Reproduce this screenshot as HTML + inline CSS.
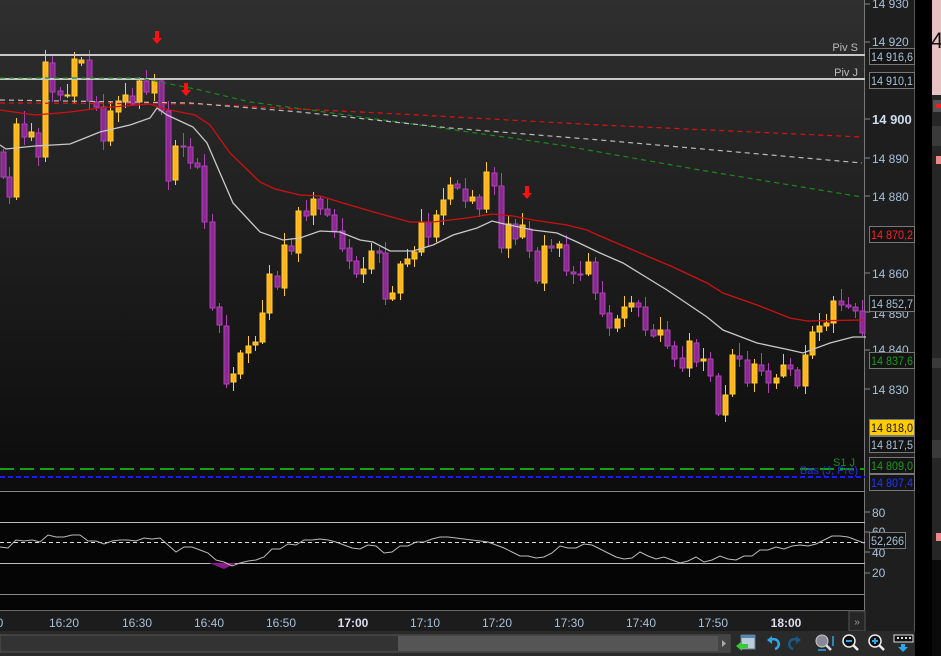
<!DOCTYPE html>
<html><head><meta charset="utf-8"><style>
html,body{margin:0;padding:0;background:#000;width:941px;height:656px;overflow:hidden;font-family:"Liberation Sans",Arial,sans-serif}
svg{position:absolute;left:0;top:0}
</style></head><body>
<svg id="s" width="941" height="656" xmlns="http://www.w3.org/2000/svg" font-family="Liberation Sans, Arial, sans-serif">
<defs>
<linearGradient id="bg" x1="0" y1="0" x2="0" y2="1">
<stop offset="0" stop-color="#2f2f2f"/><stop offset="1" stop-color="#0c0c0c"/></linearGradient>
</defs>
<rect x="0" y="0" width="865" height="491" fill="url(#bg)"/>
<rect x="0" y="491" width="865" height="120" fill="#050505"/>
<rect x="865" y="0" width="50" height="656" fill="#1e1e1e"/>
<line x1="864.5" y1="0" x2="864.5" y2="611" stroke="#777" stroke-width="1"/>
<line x1="914.5" y1="0" x2="914.5" y2="656" stroke="#555"/>
<rect x="915" y="0" width="17" height="656" fill="#000"/>
<rect x="932" y="0" width="9" height="95" fill="#e8c2c2"/>
<rect x="932" y="95" width="9" height="561" fill="#262626"/>
<rect x="933" y="100" width="8" height="12" fill="#555"/><rect x="936" y="104" width="5" height="4" fill="#e22"/>
<rect x="932" y="126" width="9" height="20" fill="#3a3a3a"/>
<rect x="936" y="156" width="5" height="8" fill="#e88"/>
<rect x="932" y="358" width="9" height="10" fill="#3a3a3a"/>
<rect x="932" y="440" width="9" height="18" fill="#3a3a3a"/>
<rect x="936" y="533" width="5" height="8" fill="#e88"/>
<rect x="932" y="560" width="9" height="96" fill="#0b0b0b"/>
<text x="931" y="48" font-size="22" fill="#111">4</text>
<g id="candles"></g>
<line x1="0" y1="55" x2="865" y2="55" stroke="#c8c8c8" stroke-width="2"/>
<line x1="0" y1="79" x2="865" y2="79" stroke="#c8c8c8" stroke-width="2"/>
<text x="858" y="51" font-size="11" fill="#bbb" text-anchor="end">Piv S</text>
<text x="858" y="76" font-size="11" fill="#bbb" text-anchor="end">Piv J</text>
<polyline points="0,78 140,78 200,90 250,102 310,110 420,125 560,145 700,170 862,197" fill="none" stroke="#1a8a1a" stroke-width="1.2" stroke-dasharray="5,4"/>
<polyline points="0,103 200,104 400,114 600,125 862,137" fill="none" stroke="#e01010" stroke-width="1.2" stroke-dasharray="5,4"/>
<polyline points="0,100 190,103 300,112 450,128 600,140 862,163" fill="none" stroke="#bbb" stroke-width="1.2" stroke-dasharray="5,4"/>
<g id="mas"></g>
<g fill="#ff1010">
<path d="M155,31h4v7h3l-5,6l-5,-6h3z"/>
<path d="M184,83h4v7h3l-5,6l-5,-6h3z"/>
<path d="M525,186h4v7h3l-5,6l-5,-6h3z"/>
</g>
<line x1="0" y1="469" x2="865" y2="469" stroke="#14a014" stroke-width="2" stroke-dasharray="14,6"/>
<line x1="0" y1="477" x2="865" y2="477" stroke="#1a1aff" stroke-width="2" stroke-dasharray="5,3"/>
<text x="855" y="466" font-size="11" fill="#1a8a1a" text-anchor="end">S1 J</text>
<text x="858" y="474" font-size="11" fill="#2233dd" text-anchor="end">Bas (J, Pré)</text>
<line x1="0" y1="491.5" x2="865" y2="491.5" stroke="#888"/>
<line x1="0" y1="522.5" x2="865" y2="522.5" stroke="#bbb"/>
<line x1="0" y1="563.5" x2="865" y2="563.5" stroke="#bbb"/>
<line x1="0" y1="594.5" x2="865" y2="594.5" stroke="#888"/>
<line x1="0" y1="542.5" x2="865" y2="542.5" stroke="#ddd" stroke-dasharray="4,3"/>
<path d="M209,563 L224,569 L236,563 Z" fill="#8a1a8a"/>
<polyline id="osc" fill="none" stroke="#bbb" stroke-width="1"/>
<rect x="0" y="611" width="865" height="20" fill="#1c1c1c"/>
<line x1="0" y1="610.5" x2="865" y2="610.5" stroke="#666"/>
<rect x="849" y="611" width="16" height="20" fill="#262626" stroke="#555"/>
<text x="857" y="625" font-size="10" fill="#999" text-anchor="middle">»</text>
<g font-size="12" fill="#a8c0d8" text-anchor="middle">
<text x="0" y="627">0</text><text x="64" y="627">16:20</text><text x="137" y="627">16:30</text><text x="209" y="627">16:40</text><text x="281" y="627">16:50</text>
<text x="353" y="627" font-weight="bold" fill="#dde">17:00</text>
<text x="425" y="627">17:10</text><text x="497" y="627">17:20</text><text x="569" y="627">17:30</text><text x="641" y="627">17:40</text><text x="713" y="627">17:50</text>
<text x="786" y="627" font-weight="bold" fill="#dde">18:00</text>
</g>
<rect x="0" y="631" width="915" height="25" fill="#2a2a2a"/>
<rect x="0" y="635" width="730" height="17" fill="#333" stroke="#555"/>
<rect x="398" y="636" width="332" height="15" fill="#555"/>
<rect x="718" y="636" width="12" height="15" fill="#444"/>
<path d="M722,640l4,3.5l-4,3.5z" fill="#aaa"/>
<g>
<rect x="741" y="635" width="14" height="14" fill="#bcd" stroke="#678"/><rect x="741" y="635" width="14" height="3" fill="#58a"/>
<path d="M736,646l6,-5v3h6v4h-6v3z" fill="#3c3"/>
<path d="M775,649a5,5 0 1,0 -4,-9" fill="none" stroke="#2aa8e8" stroke-width="2.5"/><path d="M767,640l5,-4v8z" fill="#2aa8e8"/>
<path d="M793,649a5,5 0 1,1 4,-9" fill="none" stroke="#1a5a80" stroke-width="2.5"/><path d="M801,640l-5,-4v8z" fill="#1a5a80"/>
<circle cx="822" cy="641" r="6" fill="#889" stroke="#ccc"/><path d="M826,645l5,5" stroke="#ddd" stroke-width="2.5"/>
<path d="M833,636v10M818,650h8" stroke="#2aa8e8" stroke-width="1.5"/>
<circle cx="849" cy="641" r="6" fill="#111" stroke="#eee" stroke-width="1.5"/><path d="M846,641h6" stroke="#2aa8e8" stroke-width="2"/><path d="M853,645l5,5" stroke="#eee" stroke-width="2.5"/>
<circle cx="875" cy="641" r="6" fill="#111" stroke="#eee" stroke-width="1.5"/><path d="M872,641h6M875,638v6" stroke="#2aa8e8" stroke-width="2"/><path d="M879,645l5,5" stroke="#eee" stroke-width="2.5"/>
<rect x="894" y="635" width="19" height="7" fill="#111" stroke="#ddd"/><path d="M897,638h2M901,638h2M905,638h2M909,638h2" stroke="#ddd" stroke-width="2"/>
<path d="M901,644h4v3h3l-5,5l-5,-5h3z" fill="#2aa8e8"/>
</g>
<g font-size="12" fill="#a8c0d8">
<g stroke="#888"><line x1="865" y1="4" x2="870" y2="4"/><line x1="865" y1="42" x2="870" y2="42"/><line x1="865" y1="119" x2="870" y2="119"/><line x1="865" y1="158" x2="870" y2="158"/><line x1="865" y1="196" x2="870" y2="196"/><line x1="865" y1="273" x2="870" y2="273"/><line x1="865" y1="312" x2="870" y2="312"/><line x1="865" y1="350" x2="870" y2="350"/><line x1="865" y1="389" x2="870" y2="389"/><line x1="865" y1="512" x2="870" y2="512"/><line x1="865" y1="532" x2="870" y2="532"/><line x1="865" y1="552" x2="870" y2="552"/><line x1="865" y1="573" x2="870" y2="573"/></g>
<text x="872" y="8">14 930</text><text x="872" y="46">14 920</text>
<text x="872" y="124" font-weight="bold" fill="#cde" font-size="13">14 900</text>
<text x="872" y="163">14 890</text><text x="872" y="201">14 880</text><text x="872" y="278">14 860</text>
<text x="872" y="318">14 850</text><text x="872" y="354">14 840</text><text x="872" y="394">14 830</text>
<text x="872" y="517">80</text><text x="872" y="536">60</text><text x="872" y="557">40</text><text x="872" y="577">20</text>
</g>
<g font-size="12">
<rect x="869.5" y="48.5" width="45" height="16" fill="#141414" stroke="#777"/><text x="871" y="61" fill="#a8c0d8" textLength="42" lengthAdjust="spacingAndGlyphs">14 916,6</text>
<rect x="869.5" y="72.5" width="45" height="16" fill="#141414" stroke="#777"/><text x="871" y="85" fill="#a8c0d8" textLength="42" lengthAdjust="spacingAndGlyphs">14 910,1</text>
<rect x="869.5" y="226.5" width="45" height="16" fill="#141414" stroke="#777"/><text x="871" y="239" fill="#ff2020" textLength="42" lengthAdjust="spacingAndGlyphs">14 870,2</text>
<rect x="869.5" y="295.5" width="45" height="16" fill="#141414" stroke="#777"/><text x="871" y="308" fill="#a8c0d8" textLength="42" lengthAdjust="spacingAndGlyphs">14 852,7</text>
<rect x="869.5" y="352.5" width="45" height="16" fill="#141414" stroke="#777"/><text x="871" y="365" fill="#1a9a1a" textLength="42" lengthAdjust="spacingAndGlyphs">14 837,6</text>
<rect x="869.5" y="419.5" width="45" height="16" fill="#ffcc00" stroke="#777"/><text x="871" y="432" fill="#111" textLength="42" lengthAdjust="spacingAndGlyphs">14 818,0</text>
<rect x="869.5" y="436.5" width="45" height="16" fill="#141414" stroke="#777"/><text x="871" y="449" fill="#a8c0d8" textLength="42" lengthAdjust="spacingAndGlyphs">14 817,5</text>
<rect x="869.5" y="457.5" width="45" height="16" fill="#141414" stroke="#777"/><text x="871" y="470" fill="#1a9a1a" textLength="42" lengthAdjust="spacingAndGlyphs">14 809,0</text>
<rect x="869.5" y="474.5" width="45" height="16" fill="#141414" stroke="#777"/><text x="871" y="487" fill="#2233ff" textLength="42" lengthAdjust="spacingAndGlyphs">14 807,4</text>
<rect x="869.5" y="532.5" width="36" height="16" fill="#141414" stroke="#777"/><text x="871" y="545" fill="#a8c0d8" textLength="33" lengthAdjust="spacingAndGlyphs">52,266</text>
</g>
</svg>
<script>
var C=[[0,152,177,0],[6,177,197,0],[13,124,197,1],[21,124,137,0],[28,132,137,1],[35,133,157,0],[42,62,157,1],[49,63,92,0],[57,91,95,0],[64,95,96,1],[71,59,96,1],[78,60,63,1],[86,60,101,0],[93,102,107,0],[100,107,141,0],[107,111,141,1],[115,101,112,1],[122,95,102,1],[129,96,104,0],[136,81,102,1],[143,81,92,0],[151,81,93,1],[158,81,111,0],[165,111,181,0],[172,146,180,1],[180,146,147,0],[187,147,163,0],[194,163,167,0],[201,166,222,0],[209,222,308,0],[216,307,325,0],[223,326,384,0],[230,374,382,1],[237,353,374,1],[245,346,353,1],[252,342,345,1],[259,313,342,1],[266,274,313,1],[274,276,287,0],[281,245,288,1],[288,246,251,0],[295,211,253,1],[303,211,216,0],
[310,199,215,1],[317,199,209,0],[324,209,215,0],[331,215,231,0],[339,231,249,0],[346,248,261,0],[353,261,274,0],[360,269,274,1],[368,251,269,1],[376,251,253,0],[382,253,299,0],[389,293,299,1],[397,264,293,1],[404,259,264,1],[411,252,259,1],[418,222,252,1],[425,222,237,0],[433,215,237,1],[440,200,215,1],[447,185,199,1],[454,184,188,0],[462,189,201,0],[469,197,201,1],[476,197,209,0],[483,172,209,1],[491,173,186,0],[498,186,248,0],[505,224,248,1],[512,224,239,0],[519,225,237,1],[526,229,251,0],[534,251,281,0],[541,246,283,1],[548,246,248,0],[556,244,248,1],[563,245,271,0],[570,272,274,0],[577,274,275,0],[585,262,274,1],[592,262,293,0],[599,293,314,0],[606,313,328,0],[614,319,328,1],[621,307,318,1],[628,303,307,1],[635,303,307,0],[642,307,330,0],[650,330,336,0],[657,330,335,1],[664,330,346,0],[671,346,359,0],[679,358,368,0],[686,341,368,1],[693,343,362,0],[700,359,361,1],[707,359,376,0],[715,376,414,0],[722,395,415,1],[729,355,394,1],[736,356,359,0],[744,360,383,0],[751,364,383,1],[758,365,371,0],[765,371,383,0],[773,378,383,1],[780,365,376,1],[787,365,369,0],[794,370,386,0],[802,355,386,1],[809,332,355,1],[816,326,332,1],[823,323,326,1],[830,301,323,1],[838,301,305,0],[845,305,307,0],[852,307,311,0],[859,311,333,0]];
var g=document.getElementById("candles"),h="";
C.forEach(function(c,i){var x=c[0]+3.5,t=Math.min(c[1],c[2]),b=Math.max(c[1],c[2]);var e1=3+(i*7)%11,e2=2+(i*5)%9;
var fill=c[3]?"#ffb41e":"#8a2a90",st=c[3]?"#ffcc33":"#b040b8";
h+='<line x1="'+x+'" y1="'+(t-e1)+'" x2="'+x+'" y2="'+(b+e2)+'" stroke="'+st+'" stroke-width="1"/>';
h+='<rect x="'+(c[0]+1)+'" y="'+t+'" width="5" height="'+Math.max(1,b-t)+'" fill="'+fill+'" stroke="'+st+'" stroke-width="1"/>';});
g.innerHTML=h;
var red="0,110 35,115 70,112 100,108 150,104 165,109 195,115 210,125 230,153 260,182 275,189 300,195 320,196 343,203 377,213 410,222 433,222 467,218 492,214 513,216 533,220 567,225 587,230 600,236 633,250 673,267 707,283 723,293 757,305 790,318 807,321 863,320";
var gray="0,145 6,149 35,146 70,144 100,132 130,125 150,118 157,108 167,115 193,127 207,143 233,203 260,232 283,240 300,238 320,231 340,232 360,240 373,242 390,251 413,251 433,245 453,235 477,228 492,221 500,223 533,230 557,233 577,242 600,253 623,263 667,290 707,317 723,330 757,343 790,350 803,353 830,343 853,337 866,337";
document.getElementById("mas").innerHTML='<polyline points="'+red+'" fill="none" stroke="#d01010" stroke-width="1.3"/><polyline points="'+gray+'" fill="none" stroke="#c8c8c8" stroke-width="1.3"/>';
var o=[547,548,540,541,540,542,535,537,537,535,535,541,541,544,541,540,540,541,538,539,538,545,552,547,547,550,553,560,562,566,563,561,560,557,549,549,544,545,540,540,539,540,542,545,548,549,545,546,553,552,546,546,542,542,539,537,537,538,539,540,541,542,545,548,552,556,556,558,557,553,546,548,548,544,545,549,553,557,559,558,552,556,559,557,560,563,561,557,562,560,556,559,560,556,556,550,550,547,549,546,545,546,544,540,536,536,537,540,543];
var p=[];for(var i=0;i<o.length;i++)p.push((i*8).toFixed(0)+","+o[i]);
document.getElementById("osc").setAttribute("points",p.join(" "));
</script>
</body></html>
